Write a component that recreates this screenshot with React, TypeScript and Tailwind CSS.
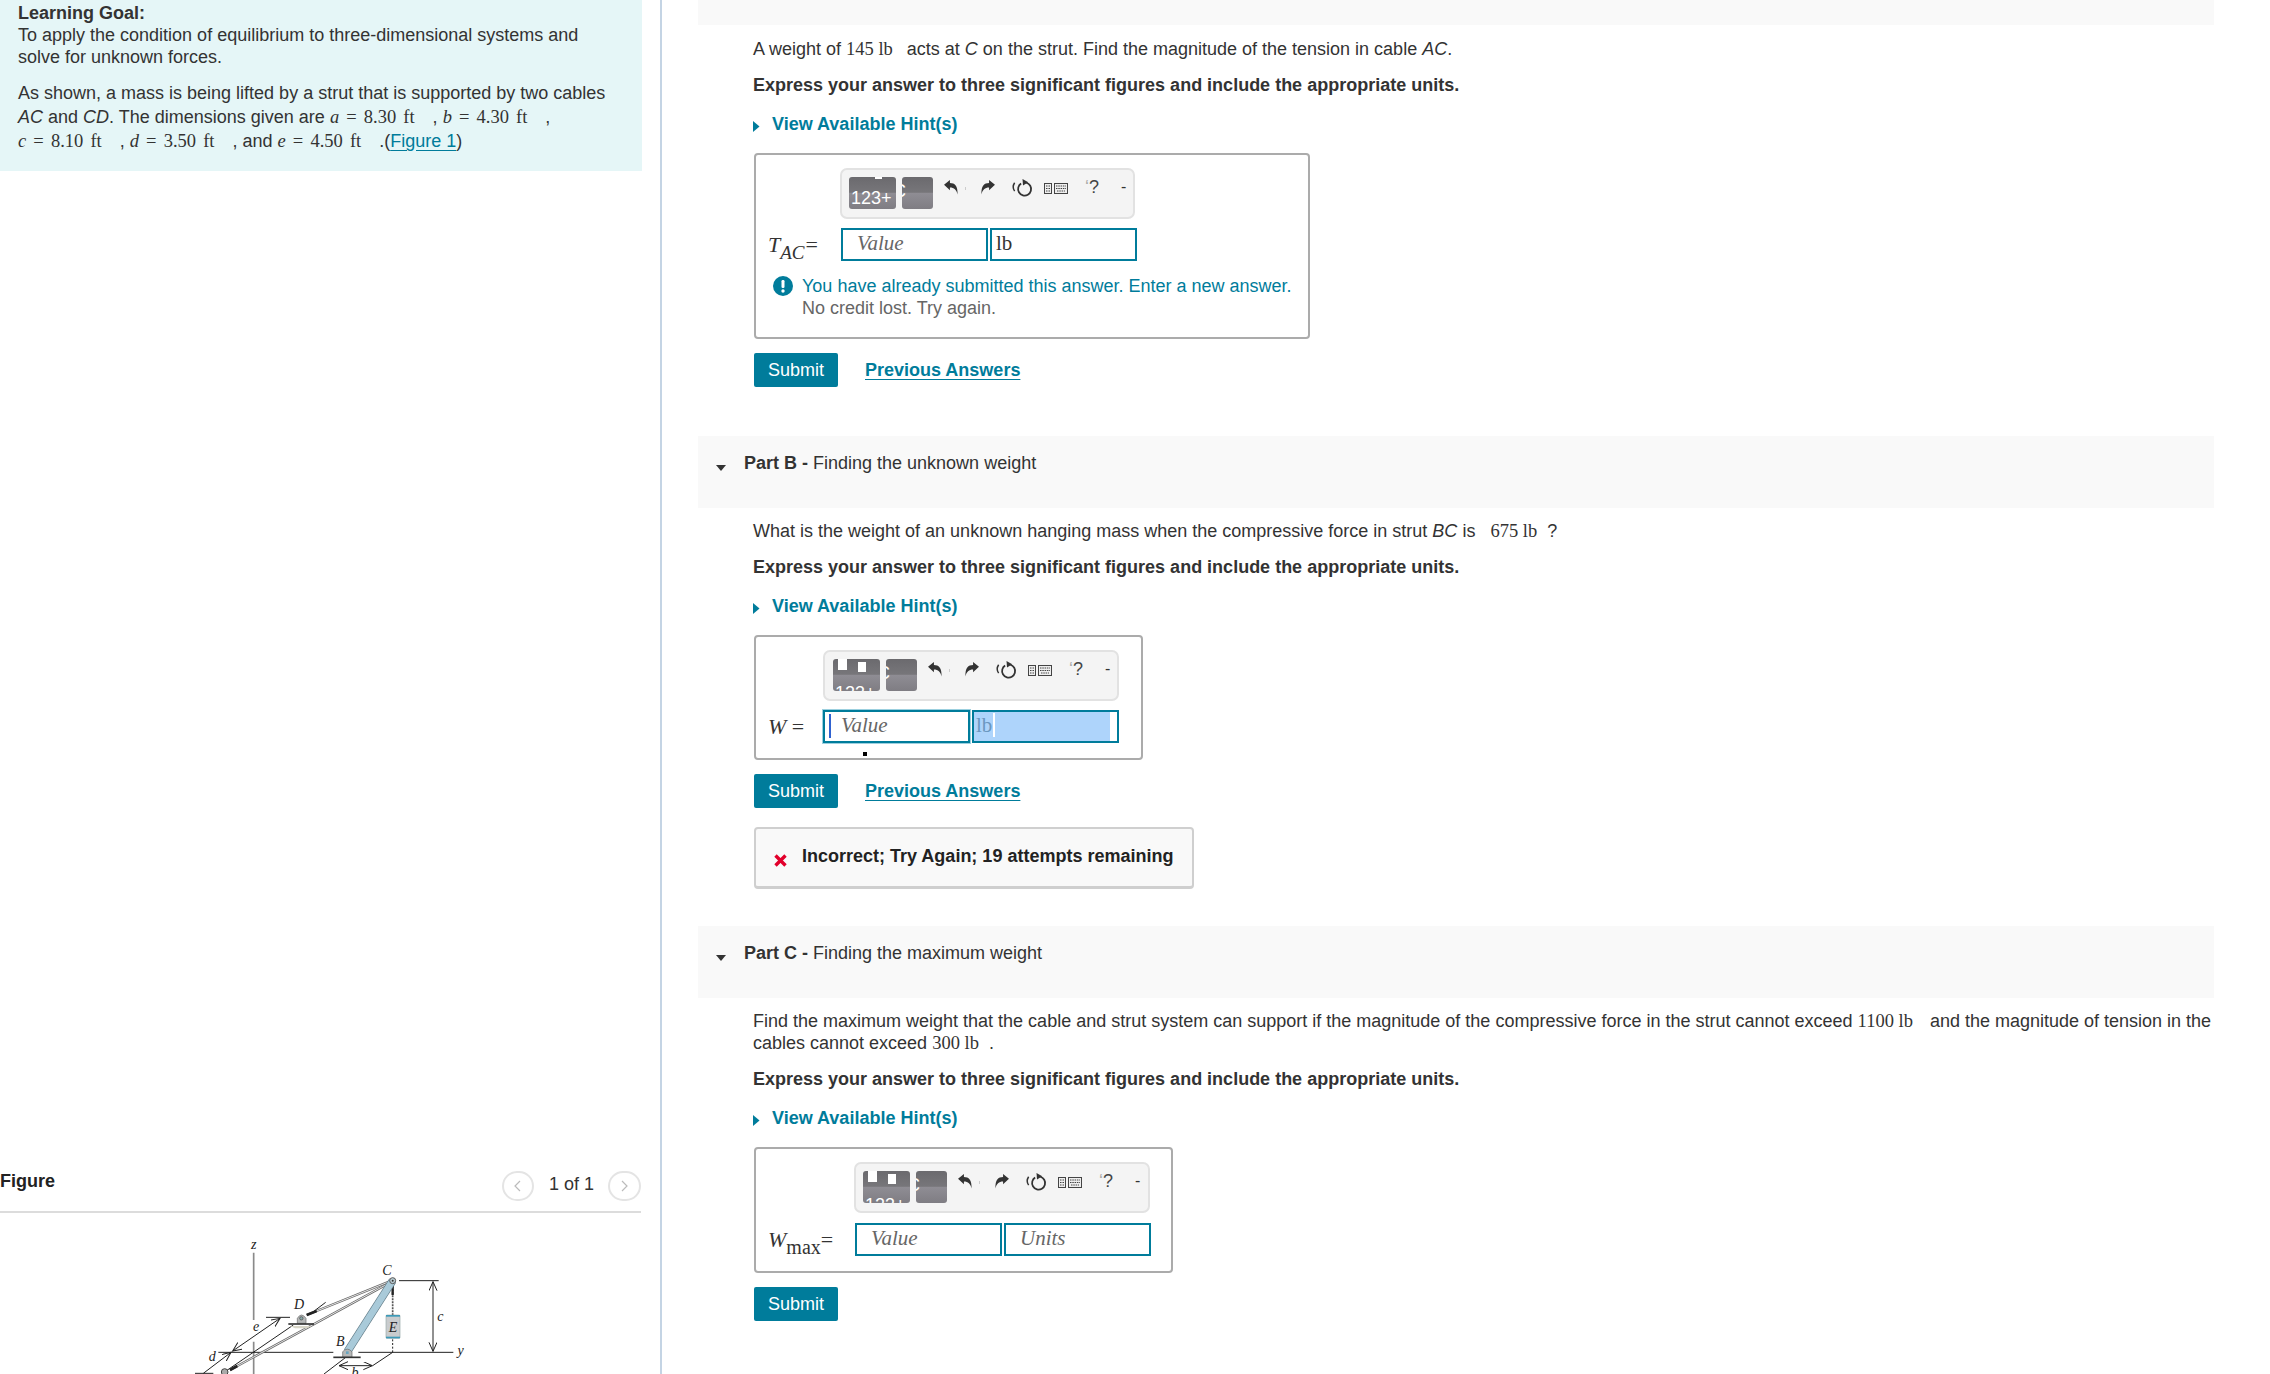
import React from "react";

const M = ({ children, gap = "" }: { children: React.ReactNode; gap?: string }) => (
  <span className={`font-['Liberation_Serif',serif] text-[18.5px] leading-none whitespace-nowrap ${gap}`}>{children}</span>
);
const I = ({ children }: { children: React.ReactNode }) => <i className="italic">{children}</i>;

function GrayBlock({ wide, loaded }: { wide?: boolean; loaded?: boolean }) {
  if (!wide) {
    return (
      <div className="relative w-[31px] h-[32px] ml-[6px] rounded-[3px] overflow-hidden bg-[linear-gradient(#6b6a6e_0,#77767a_48%,#8f8d94_50%,#7f7d83_100%)]">
        <span className="absolute left-[-9px] top-[3px] text-[18px] leading-[22px] text-white">C</span>
      </div>
    );
  }
  return (
    <div className="relative w-[47px] h-[32px] rounded-[3px] overflow-hidden bg-[linear-gradient(#6b6a6e_0,#77767a_48%,#8f8d94_50%,#7f7d83_100%)]">
      {loaded ? (
        <>
          <span className="absolute left-[26px] top-0 w-[7px] h-[2px] bg-white" />
          <span className="absolute left-[2px] top-[10px] text-[18px] leading-[22px] text-white">123+</span>
        </>
      ) : (
        <>
          <span className="absolute left-[5px] top-0 w-[9px] h-[11px] bg-white" />
          <span className="absolute left-[25px] top-[3px] w-[8px] h-[10px] bg-white" />
          <span className="absolute left-[2px] top-[23px] text-[18px] leading-[22px] text-white">123+</span>
        </>
      )}
    </div>
  );
}

function Toolbar({ loaded, cls }: { loaded?: boolean; cls: string }) {
  return (
    <div className={`flex items-start pt-[7px] h-[51px] bg-[#f4f4f4] border-2 border-[#e2e2e2] rounded-[7px] ${cls}`}>
      <GrayBlock wide loaded={loaded} />
      <GrayBlock />
      <svg className="ml-[11px] mt-[3px]" width="14" height="15" viewBox="0 0 13 14">
        <path d="M0 4.5 L5.5 0 V2.8 C10 2.8 13 5.5 12.6 13.5 C11.5 9 9.5 7 5.5 7 V9.5 Z" fill="#333" />
      </svg>
      <span className="ml-[7px] mt-[10px] w-[1px] h-[3px] bg-[#ccc]" />
      <svg className="ml-[15px] mt-[3px]" width="14" height="15" viewBox="0 0 13 14">
        <path d="M13 4.5 L7.5 0 V2.8 C3 2.8 0 5.5 0.4 13.5 C1.5 9 3.5 7 7.5 7 V9.5 Z" fill="#333" />
      </svg>
      <svg className="ml-[17px] mt-[2px]" width="21" height="18" viewBox="0 0 20 17">
        <path d="M2.5 3.5 C0.8 6 0.8 9 2.5 11.5" fill="none" stroke="#333" strokeWidth="1.4" />
        <circle cx="12" cy="9.5" r="6.2" fill="none" stroke="#333" strokeWidth="1.7" strokeDasharray="33 6" transform="rotate(-75 12 9.5)" />
        <path d="M10 0 L15.5 3 L10.5 6 Z" fill="#333" />
      </svg>
      <svg className="ml-[11px] mt-[6px]" width="24" height="11" viewBox="0 0 24 11">
        <rect x="0.5" y="0.5" width="7" height="10" fill="#eee" stroke="#444" />
        <path d="M2 3h4M2 5.5h4M2 8h4" stroke="#444" strokeDasharray="1.5 1" />
        <rect x="10.5" y="0.5" width="13" height="10" fill="#eee" stroke="#444" />
        <path d="M12 3h10M12 5.5h10M13 8h8" stroke="#444" strokeDasharray="1.5 0.8" />
      </svg>
      <span className="ml-[17px] w-[17px] text-[18px] leading-[20px] text-[#444] whitespace-nowrap">
        <span className="text-[#aaa]">‘</span>?
      </span>
      <span className="ml-[19px] text-[16px] leading-[20px] text-[#333]">-</span>
    </div>
  );
}

function Field({ children, focus }: { children?: React.ReactNode; focus?: boolean }) {
  return (
    <div className={`relative w-[147px] h-[33px] border-2 border-[#007c9b] font-['Liberation_Serif',serif] text-[21px] leading-[26px] ${focus ? "shadow-[0_0_0_1px_#9cd0df]" : ""}`}>
      {children}
    </div>
  );
}
const Placeholder = ({ t }: { t: string }) => <span className="pl-[14px] italic text-[#666]">{t}</span>;

const Hint = () => (
  <div className="flex items-center mt-[17px] h-[22px]">
    <svg width="7" height="11" viewBox="0 0 7 11" className="mt-[4px]"><path d="M0 0 L6.5 5.5 L0 11 Z" fill="#007c9b" /></svg>
    <span className="ml-[12px] text-[18px] font-bold text-[#007c9b]">View Available Hint(s)</span>
  </div>
);
const Express = () => <p className="mt-[14px] font-bold leading-[22px]">Express your answer to three significant figures and include the appropriate units.</p>;
const Submit = ({ cls = "" }: { cls?: string }) => (
  <button className={`w-[84px] h-[34px] rounded-[2px] bg-[#007c9b] text-white text-[18px] ${cls}`}>Submit</button>
);
const Prev = () => <a className="ml-[27px] text-[18px] font-bold text-[#007c9b] underline underline-offset-[3px]">Previous Answers</a>;
const PartHeader = ({ a, b, cls }: { a: string; b: string; cls: string }) => (
  <div className={`flex items-start h-[72px] bg-[#f9f9f9] pt-[16px] pl-[18px] ${cls}`}>
    <svg width="10" height="6" viewBox="0 0 10 6" className="mt-[13px]"><path d="M0 0 H10 L5 6 Z" fill="#333" /></svg>
    <p className="ml-[18px] leading-[22px]"><b>{a} - </b>{b}</p>
  </div>
);
const Lbl = ({ w, children }: { w: string; children: React.ReactNode }) => (
  <div className={`${w} shrink-0 font-['Liberation_Serif',serif] text-[22px] italic leading-[24px] whitespace-nowrap pt-[5px] ml-[-1px] text-[#333]`}>{children}</div>
);

function Figure() {
  const ink = "#222";
  const serif = "'Liberation Serif', serif";
  return (
    <svg className="ml-[150px] mt-[17px]" width="350" height="144" viewBox="0 0 1050 432">
      <defs>
        <marker id="ah" markerWidth="10" markerHeight="10" refX="9" refY="4" orient="auto-start-reverse">
          <path d="M0 0 L9 4 L0 8" fill="none" stroke={ink} strokeWidth="1" />
        </marker>
      </defs>
      <g fontFamily={serif} fontStyle="italic" fontSize="42" fill="#222" textAnchor="middle">
        <text x="311" y="58">z</text>
        <text x="711" y="134">C</text>
        <text x="447" y="238">D</text>
        <text x="318" y="304">e</text>
        <text x="187" y="392">d</text>
        <text x="571" y="348">B</text>
        <text x="871" y="272">c</text>
        <text x="932" y="374">y</text>
        <text x="615" y="442">b</text>
      </g>
      <path d="M311 68 V270 M311 335 V432" stroke="#8a8a8a" strokeWidth="5" />
      <path d="M205 367 H550 M625 367 H910" stroke={ink} strokeWidth="3" />
      <path d="M747 152 H866" stroke={ink} strokeWidth="3" />
      <path d="M849 155 V364" stroke={ink} strokeWidth="3" markerStart="url(#ah)" markerEnd="url(#ah)" />
      <path d="M348 262 H420 M135 430 H190" stroke={ink} strokeWidth="3" />
      <path d="M248 363 L390 265" stroke={ink} strokeWidth="3" markerStart="url(#ah)" markerEnd="url(#ah)" />
      <path d="M160 430 L243 367" stroke={ink} strokeWidth="3" markerEnd="url(#ah)" />
      <path d="M567 407 H667" stroke={ink} strokeWidth="3" markerStart="url(#ah)" markerEnd="url(#ah)" />
      <path d="M728 367 L668 407 M590 380 L522 432 M430 285 L225 425 M490 245 L527 217" stroke={ink} strokeWidth="3" />
      <path d="M728 328 V367" stroke={ink} strokeWidth="3" strokeDasharray="6 5" />
      <path d="M728 160 V255" stroke="#555" strokeWidth="5" strokeDasharray="6 3" />
      <path d="M728 165 V195" stroke="#222" strokeWidth="7" />
      <path d="M470 255 L725 152" stroke="#666" strokeWidth="7" />
      <path d="M470 255 L725 152" stroke="#e4e4e4" strokeWidth="3" />
      <path d="M240 420 L725 155" stroke="#666" strokeWidth="7" />
      <path d="M240 420 L725 155" stroke="#e4e4e4" strokeWidth="3" />
      <path d="M470 255 L500 243 M240 420 L262 408" stroke="#222" strokeWidth="8" />
      <path d="M592 365 L728 152" stroke="#5d7783" strokeWidth="24" />
      <path d="M592 365 L728 152" stroke="#a9cad9" strokeWidth="20" />
      <circle cx="728" cy="152" r="9" fill="#b9cdd4" stroke="#555" strokeWidth="3" />
      <circle cx="728" cy="152" r="3" fill="#333" />
      <rect x="708" y="255" width="42" height="70" rx="3" fill="#c9ccce" stroke="#9aa" strokeWidth="2" />
      <rect x="708" y="255" width="42" height="5" fill="#3d9ab8" />
      <rect x="708" y="320" width="42" height="5" fill="#3d9ab8" />
      <text x="729" y="306" fontFamily={serif} fontStyle="italic" fontSize="42" fill="#222" textAnchor="middle">E</text>
      <path d="M578 382 V365 Q592 350 606 365 V382 Z" fill="#b6b8b8" stroke="#666" strokeWidth="2" />
      <rect x="588" y="364" width="8" height="8" fill="#6aa6c0" />
      <path d="M550 382 H632" stroke="#333" strokeWidth="5" />
      <path d="M442 280 V265 Q454 245 468 265 V280 Z" fill="#b6b8b8" stroke="#666" strokeWidth="2" />
      <circle cx="454" cy="265" r="5" fill="#8aa" stroke="#444" strokeWidth="2" />
      <path d="M415 282 H492" stroke="#333" strokeWidth="5" />
      <path d="M420 288 H485 L470 295 H435 Z" fill="#d8d6c8" />
      <circle cx="224" cy="426" r="10" fill="#aaa" stroke="#444" strokeWidth="3" />
    </svg>
  );
}

export default function App() {
  return (
    <div className="flex h-[1374px] w-[2270px] overflow-hidden bg-white text-[18px] text-[#333] font-['Liberation_Sans',Arial,sans-serif]">
      <div className="w-[660px] shrink-0">
        <div className="w-[642px] h-[171px] bg-[#e5f6f7] pl-[18px] pr-[24px]">
          <p className="leading-[22px] pt-[2px]"><b>Learning Goal:</b><br />To apply the condition of equilibrium to three-dimensional systems and solve for unknown forces.</p>
          <p className="leading-[24px] mt-[13px]">
            As shown, a mass is being lifted by a strut that is supported by two cables <I>AC</I> and <I>CD</I>. The dimensions given are{" "}
            <M gap="mr-[18px] [word-spacing:2.5px]"><I>a</I> = 8.30 ft</M>, <M gap="mr-[18px] [word-spacing:2.5px]"><I>b</I> = 4.30 ft</M>,{" "}
            <M gap="mr-[18px] [word-spacing:2.5px]"><I>c</I> = 8.10 ft</M>, <M gap="mr-[18px] [word-spacing:2.5px]"><I>d</I> = 3.50 ft</M>, and <M gap="mr-[18px] [word-spacing:2.5px]"><I>e</I> = 4.50 ft</M>.(<a className="text-[#007c9b] underline underline-offset-[3px]">Figure 1</a>)
          </p>
        </div>
        <div className="mt-[1000px] w-[641px] h-[42px] border-b-2 border-[#dcdcdc] flex items-start">
          <b className="leading-[22px] text-[#222] translate-y-[-1px]">Figure</b>
          <div className="ml-auto flex items-center">
            <span className="flex items-center justify-center w-[32px] h-[30px] rounded-full border-2 border-[#e4e4e4]">
              <svg width="7" height="12" viewBox="0 0 7 12"><path d="M6 1 L1 6 L6 11" fill="none" stroke="#bbb" strokeWidth="1.2" /></svg>
            </span>
            <span className="ml-[15px] leading-[22px] text-[#333] translate-y-[-2px]">1 of 1</span>
            <span className="ml-[14px] flex items-center justify-center w-[33px] h-[30px] rounded-full border-2 border-[#e4e4e4]">
              <svg width="7" height="12" viewBox="0 0 7 12"><path d="M1 1 L6 6 L1 11" fill="none" stroke="#bbb" strokeWidth="1.2" /></svg>
            </span>
          </div>
        </div>
        <Figure />
      </div>

      <div className="w-[2px] h-[1374px] shrink-0 bg-[#c4d4e4]" />

      <div className="ml-[36px] w-[1516px] shrink-0">
        <div className="h-[25px] bg-[#f9f9f9]" />
        <div className="pl-[55px]">
          <p className="mt-[13px] leading-[22px]">A weight of <M gap="mr-[14px]">145 lb</M>acts at <I>C</I> on the strut. Find the magnitude of the tension in cable <I>AC</I>.</p>
          <Express />
          <Hint />
          <div className="mt-[18px] ml-[1px] w-[556px] h-[186px] border-2 border-[#ababab] rounded-[4px] pl-[13px] pt-[13px]">
            <Toolbar loaded cls="ml-[71px] w-[295px] pl-[7px]" />
            <div className="flex mt-[9px]">
              <Lbl w="w-[73px]">T<sub className="text-[19px] align-[-2px] leading-none mr-[1px]">AC</sub><span className="not-italic">=</span></Lbl>
              <Field><Placeholder t="Value" /></Field>
              <div className="ml-[2px]"><Field><span className="pl-[4px] text-[#333]">lb</span></Field></div>
            </div>
            <div className="flex mt-[14px] ml-[4px]">
              <svg width="20" height="20" viewBox="0 0 20 20" className="mt-[1px] shrink-0">
                <circle cx="10" cy="10" r="10" fill="#007c9b" />
                <rect x="8.5" y="4" width="3" height="8" rx="1.2" fill="#fff" />
                <circle cx="10" cy="15" r="1.7" fill="#fff" />
              </svg>
              <div className="ml-[9px] leading-[22px]">
                <p className="text-[#007c9b]">You have already submitted this answer. Enter a new answer.</p>
                <p className="text-[#666]">No credit lost. Try again.</p>
              </div>
            </div>
          </div>
          <div className="flex items-center mt-[14px] ml-[1px]"><Submit /><Prev /></div>
        </div>

        <PartHeader a="Part B" b="Finding the unknown weight" cls="mt-[49px]" />
        <div className="pl-[55px]">
          <p className="mt-[12px] leading-[22px]">What is the weight of an unknown hanging mass when the compressive force in strut <I>BC</I> is <M gap="mx-[10px]">675 lb</M>?</p>
          <Express />
          <Hint />
          <div className="relative mt-[18px] ml-[1px] w-[389px] h-[125px] border-2 border-[#ababab] rounded-[4px] pl-[13px] pt-[13px]">
            <Toolbar cls="ml-[54px] w-[296px] pl-[8px]" />
            <div className="flex mt-[9px]">
              <Lbl w="w-[55px]">W <span className="not-italic">=</span></Lbl>
              <Field focus>
                <span className="absolute left-[4px] top-[2px] w-[2px] h-[24px] bg-[#2f62d0]" />
                <span className="ml-[2px]"><Placeholder t="Value" /></span>
              </Field>
              <div className="ml-[2px]">
                <Field>
                  <div className="h-full w-[136px] bg-[#aed4fb] pl-[2px] text-[#6b97c0]"><span className="border-r-2 border-white pr-[1px]">lb</span></div>
                </Field>
              </div>
            </div>
            <span className="absolute left-[107px] top-[115px] w-[4px] h-[4px] bg-black" />
          </div>
          <div className="flex items-center mt-[14px] ml-[1px]"><Submit /><Prev /></div>
          <div className="flex mt-[19px] ml-[1px] w-[440px] h-[62px] bg-[#f9f9f9] border-2 border-b-[3px] border-[#cfcfcf] rounded-[4px] pl-[18px] pt-[16px]">
            <svg width="13" height="13" viewBox="0 0 13 13" className="mt-[9px] shrink-0"><path d="M1.5 1.5 L11.5 11.5 M11.5 1.5 L1.5 11.5" stroke="#e2002b" strokeWidth="3.4" /></svg>
            <b className="ml-[15px] leading-[22px] text-[#222]">Incorrect; Try Again; 19 attempts remaining</b>
          </div>
        </div>

        <PartHeader a="Part C" b="Finding the maximum weight" cls="mt-[37px]" />
        <div className="pl-[55px]">
          <p className="mt-[12px] leading-[22px]">Find the maximum weight that the cable and strut system can support if the magnitude of the compressive force in the strut cannot exceed <M gap="mr-[17px]">1100 lb</M>and the magnitude of tension in the cables cannot exceed <M gap="mr-[10px]">300 lb</M>.</p>
          <Express />
          <Hint />
          <div className="mt-[18px] ml-[1px] w-[419px] h-[126px] border-2 border-[#ababab] rounded-[4px] pl-[13px] pt-[13px]">
            <Toolbar cls="ml-[85px] w-[296px] pl-[7px]" />
            <div className="flex mt-[10px]">
              <Lbl w="w-[87px]">W<sub className="not-italic text-[20px] align-[-2px] leading-none">max</sub><span className="not-italic">=</span></Lbl>
              <Field><Placeholder t="Value" /></Field>
              <div className="ml-[2px]"><Field><Placeholder t="Units" /></Field></div>
            </div>
          </div>
          <div className="mt-[14px] ml-[1px]"><Submit /></div>
        </div>
      </div>
    </div>
  );
}
